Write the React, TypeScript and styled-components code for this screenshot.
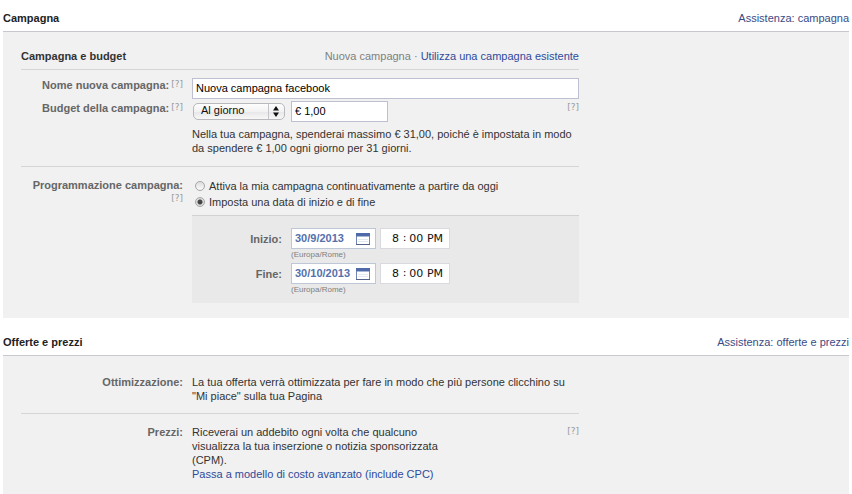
import React from "react";
import styled, { createGlobalStyle } from "styled-components";

const GlobalStyle = createGlobalStyle`
  *, *::before, *::after { box-sizing: border-box; }
  body {
    margin: 0;
    background: #fff;
    color: #333;
    font: 11px/14px "Liberation Sans", Arial, Helvetica, sans-serif;
  }
  button, input, select { font: inherit; margin: 0; }
`;

const Page = styled.main`
  display: flex;
  flex-direction: column;
  padding: 0 3px;
`;

const SectionHeader = styled.header`
  display: flex;
  justify-content: space-between;
  align-items: flex-start;
  padding: 11px 0 6px;
  border-bottom: 1px solid #c8c8cc;
`;

const SectionTitle = styled.h2`
  margin: 0;
  font-size: 11px;
  line-height: 14px;
  color: #222;
`;

const Link = styled.a<{ $dark?: boolean }>`
  color: ${(p) => (p.$dark ? "#3b4a86" : "#2f4a9b")};
  text-decoration: none;
  &:hover { text-decoration: underline; }
`;

const Panel = styled.div<{ $top: number }>`
  padding: ${(p) => p.$top}px 18px 15px;
  margin-bottom: 6px;
  background: #f1f1f1;
`;

const Form = styled.form`
  display: flex;
  flex-direction: column;
  max-width: 558px;
`;

const FormHeader = styled.div`
  display: flex;
  justify-content: space-between;
  padding-bottom: 6px;
  border-bottom: 1px solid #d6d6d6;
  margin-bottom: 8px;
`;

const FormTitle = styled.h3`
  margin: 0;
  font-size: 11px;
  color: #333;
`;

const Muted = styled.span`
  color: #808080;
`;

const Row = styled.div<{ $gap?: number }>`
  display: grid;
  grid-template-columns: 162px minmax(0, 1fr);
  column-gap: 9px;
  margin-bottom: ${(p) => p.$gap ?? 0}px;
`;

const LabelCell = styled.div`
  display: flex;
  flex-wrap: wrap;
  justify-content: flex-end;
  align-content: flex-start;
  column-gap: 2px;
  color: #666;
  font-weight: bold;
  white-space: nowrap;
`;

const HelpButton = styled.button`
  display: block;
  flex: none;
  height: 12px;
  padding: 0;
  border: 0;
  background: none;
  color: #999;
  font-size: 9px;
  line-height: 12px;
  font-weight: normal;
  font-family: "DejaVu Sans", sans-serif;
  cursor: help;
`;

const Field = styled.div`
  display: flex;
  flex-direction: column;
  min-width: 0;
`;

const Line = styled.div`
  display: flex;
  align-items: flex-start;
  gap: 6px;
`;

const Push = styled.div`
  margin-left: auto;
`;

const TextInput = styled.input<{ $width: string }>`
  width: ${(p) => p.$width};
  height: 21px;
  padding: 0 3px 2px;
  border: 1px solid #bdc0d0;
  border-radius: 0;
  background: #fff;
  color: #000;
`;

const SelectWrap = styled.div`
  display: grid;
  align-items: center;
  width: 92px;
  height: 17px;
  margin: 2px 0 0 1px;
  border: 1px solid #b9b9bd;
  border-radius: 5px;
  background: linear-gradient(#fdfdfd, #f2f2f2 50%, #e6e6e8 50%, #f8f8f8);
  > * { grid-area: 1 / 1; }
`;

const Select = styled.select`
  width: 100%;
  height: 15px;
  padding: 0 20px 2px 7px;
  border: 0;
  appearance: none;
  background: transparent;
  color: #111;
  line-height: 13px;
`;

const SelectArrows = styled.svg`
  justify-self: end;
  pointer-events: none;
`;

const Paragraph = styled.p<{ $top?: number; $max?: number }>`
  margin: ${(p) => p.$top ?? 0}px 0 0;
  max-width: ${(p) => (p.$max ? `${p.$max}px` : "none")};
`;

const Divider = styled.hr`
  width: 100%;
  height: 1px;
  margin: 10px 0 11px;
  border: 0;
  background: #d6d6d6;
`;

const RadioLabel = styled.label`
  display: flex;
  align-items: center;
  gap: 4px;
  height: 16px;
  padding-left: 3px;
`;

const Radio = styled.input`
  appearance: none;
  width: 10px;
  height: 10px;
  border: 1px solid #a6a6a6;
  border-radius: 50%;
  background: linear-gradient(#dedede, #fafafa);
  &:checked {
    background: radial-gradient(circle, #444 0 2px, #dcdcdc 3px);
  }
`;

const Schedule = styled.div`
  display: flex;
  flex-direction: column;
  gap: 3px;
  margin-top: 5px;
  padding: 12px 0 8px;
  border-top: 1px solid #d2d2d2;
  background: #e9e9e9;
`;

const ScheduleRow = styled.div`
  display: grid;
  grid-template-columns: 90px minmax(0, 1fr);
  column-gap: 9px;
`;

const ScheduleLabel = styled.label`
  padding-top: 4px;
  text-align: right;
  color: #666;
  font-weight: bold;
`;

const DateBox = styled.div`
  display: flex;
  align-items: center;
  width: 85px;
  height: 21px;
  border: 1px solid #bdc7d8;
  background: #fff;
`;

const DateInput = styled.input`
  flex: 1;
  min-width: 0;
  height: 19px;
  padding: 0 0 1px 3px;
  border: 0;
  background: none;
  color: #5470ac;
  font-weight: bold;
`;

const CalendarButton = styled.button`
  display: flex;
  padding: 0;
  margin-right: 5px;
  border: 0;
  background: none;
`;

const TimeBox = styled.div`
  display: flex;
  align-items: center;
  justify-content: space-between;
  width: 70px;
  height: 21px;
  margin-left: -2px;
  padding: 0 5px 1px 11px;
  border: 1px solid #d8dae0;
  background: #fff;
  color: #111;
  font-family: "DejaVu Sans", sans-serif;
`;

const TimeInput = styled.input<{ $width: number }>`
  width: ${(p) => p.$width}px;
  height: 17px;
  padding: 0;
  border: 0;
  background: none;
  color: #111;
`;

const Zone = styled.small`
  height: 11px;
  color: #808080;
  font-size: 8px;
  line-height: 11px;
`;

function Help({ topic }: { topic: string }) {
  return (
    <HelpButton type="button" aria-label={`Aiuto: ${topic}`}>
      [?]
    </HelpButton>
  );
}

function CalendarIcon() {
  return (
    <svg width="14" height="12" viewBox="0 0 14 12" aria-hidden="true">
      <rect x="0.5" y="0.5" width="13" height="11" fill="#fff" stroke="#7085b4" />
      <rect width="14" height="3" fill="#4f6aa8" />
      <path d="M1 3.5h12" stroke="#a9b8d6" />
      <path d="M2 6.5h10M2 8.5h10" stroke="#e3e8f1" />
      <path d="M0 11.5h14" stroke="#53638a" />
    </svg>
  );
}

function DateTimeRow({ id, label, date }: { id: string; label: string; date: string }) {
  return (
    <ScheduleRow>
      <ScheduleLabel htmlFor={id}>{label}</ScheduleLabel>
      <Field>
        <Line>
          <DateBox>
            <DateInput id={id} defaultValue={date} />
            <CalendarButton type="button" aria-label={`Calendario ${label}`}>
              <CalendarIcon />
            </CalendarButton>
          </DateBox>
          <TimeBox>
            <TimeInput $width={8} aria-label={`${label} ora`} defaultValue="8" />
            <span>:</span>
            <TimeInput $width={15} aria-label={`${label} minuti`} defaultValue="00" />
            <TimeInput $width={17} aria-label={`${label} AM o PM`} defaultValue="PM" />
          </TimeBox>
        </Line>
        <Zone>(Europa/Rome)</Zone>
      </Field>
    </ScheduleRow>
  );
}

function Section(props: {
  title: string;
  help: string;
  top: number;
  children: React.ReactNode;
}) {
  return (
    <section>
      <SectionHeader>
        <SectionTitle>{props.title}</SectionTitle>
        <Link $dark href="#assistenza">{props.help}</Link>
      </SectionHeader>
      <Panel $top={props.top}>
        <Form>{props.children}</Form>
      </Panel>
    </section>
  );
}

export default function App() {
  return (
    <>
      <GlobalStyle />
      <Page>
        <Section title="Campagna" help="Assistenza: campagna" top={17}>
          <FormHeader>
            <FormTitle>Campagna e budget</FormTitle>
            <Muted>
              Nuova campagna · <Link href="#esistente">Utilizza una campagna esistente</Link>
            </Muted>
          </FormHeader>
          <Row $gap={2}>
            <LabelCell>
              <label htmlFor="nome">Nome nuova campagna:</label>
              <Help topic="nome" />
            </LabelCell>
            <TextInput id="nome" $width="100%" defaultValue="Nuova campagna facebook" />
          </Row>
          <Row $gap={1}>
            <LabelCell>
              <label htmlFor="budget">Budget della campagna:</label>
              <Help topic="budget" />
            </LabelCell>
            <Field>
              <Line>
                <SelectWrap>
                  <Select aria-label="Periodo del budget" defaultValue="giorno">
                    <option value="giorno">Al giorno</option>
                    <option value="durata">Durata</option>
                  </Select>
                  <SelectArrows width="16" height="15" viewBox="0 0 16 15" aria-hidden="true">
                    <path d="M0.5 0v15" stroke="#c4c4c8" />
                    <path d="M8 2l3 4.500h-6zM8 13l3-4.500h-6z" fill="#111" />
                  </SelectArrows>
                </SelectWrap>
                <TextInput id="budget" $width="97px" defaultValue="€ 1,00" />
                <Push>
                  <Help topic="importo" />
                </Push>
              </Line>
              <Paragraph $top={5}>
                Nella tua campagna, spenderai massimo € 31,00, poiché è impostata in modo
                <br />
                da spendere € 1,00 ogni giorno per 31 giorni.
              </Paragraph>
            </Field>
          </Row>
          <Divider />
          <Row>
            <LabelCell>
              <span id="programmazione">Programmazione campagna:</span>
              <Help topic="programmazione" />
            </LabelCell>
            <Field role="radiogroup" aria-labelledby="programmazione">
              <RadioLabel>
                <Radio type="radio" name="periodo" />
                Attiva la mia campagna continuativamente a partire da oggi
              </RadioLabel>
              <RadioLabel>
                <Radio type="radio" name="periodo" defaultChecked />
                Imposta una data di inizio e di fine
              </RadioLabel>
              <Schedule>
                <DateTimeRow id="inizio" label="Inizio:" date="30/9/2013" />
                <DateTimeRow id="fine" label="Fine:" date="30/10/2013" />
              </Schedule>
            </Field>
          </Row>
        </Section>
        <Section title="Offerte e prezzi" help="Assistenza: offerte e prezzi" top={19}>
          <Row>
            <LabelCell>Ottimizzazione:</LabelCell>
            <Paragraph>
              La tua offerta verrà ottimizzata per fare in modo che più persone clicchino su
              <br />
              "Mi piace" sulla tua Pagina
            </Paragraph>
          </Row>
          <Divider />
          <Row>
            <LabelCell>Prezzi:</LabelCell>
            <Line>
              <div>
                <Paragraph $max={260}>
                  Riceverai un addebito ogni volta che qualcuno
                  <br />
                  visualizza la tua inserzione o notizia sponsorizzata
                  <br />
                  (CPM).
                </Paragraph>
                <Link href="#avanzato">Passa a modello di costo avanzato (include CPC)</Link>
              </div>
              <Push>
                <Help topic="prezzi" />
              </Push>
            </Line>
          </Row>
        </Section>
      </Page>
    </>
  );
}
